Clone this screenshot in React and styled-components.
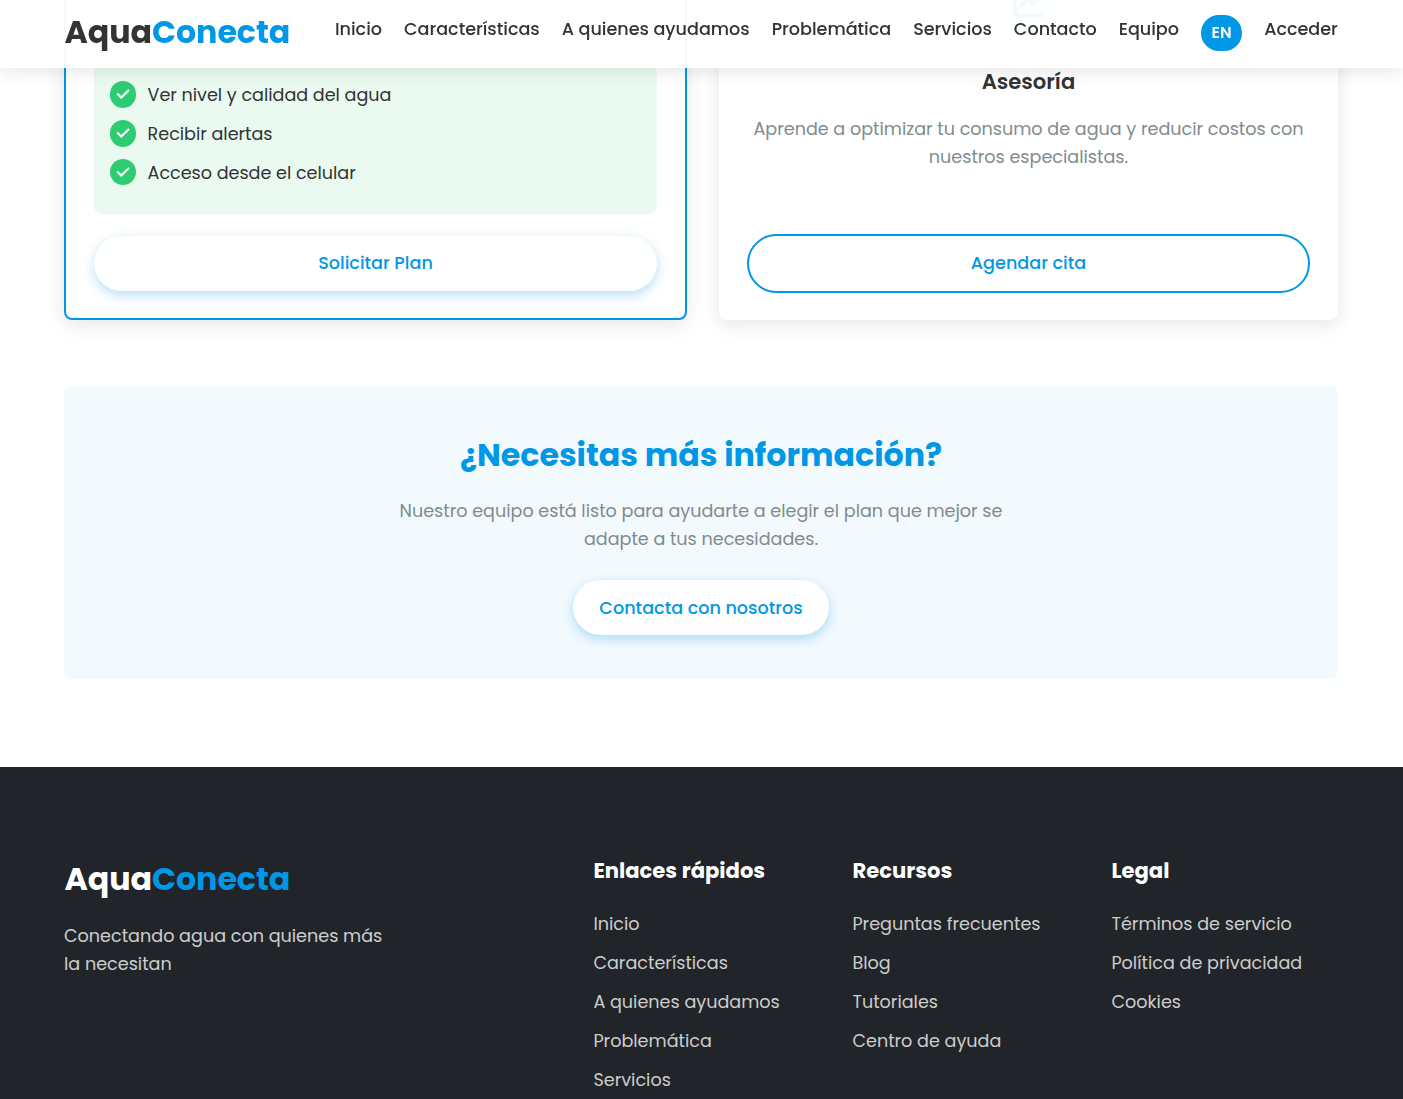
import React from "react";
import styled, { createGlobalStyle, css } from "styled-components";
import { FaCheck, FaChartLine } from "react-icons/fa6";

const blue = "#0097e6";
const ink = "#333333";
const muted = "#7f8c8d";

const GlobalStyle = createGlobalStyle`
  *, *::before, *::after { box-sizing: border-box; }
  html { font-size: 17.6px; }
  body {
    margin: 0;
    overflow: hidden;
    background: #ffffff;
    color: ${ink};
    font-family: Poppins, Inter, "Open Sans", sans-serif;
    font-size: 1rem;
    line-height: 1.6;
  }
  h2, h3, p, ul { margin: 0; padding: 0; }
  ul { list-style: none; }
  a { color: inherit; text-decoration: none; }
`;

const Page = styled.div`
  height: 1099px;
  display: flex;
  flex-direction: column;
  overflow: hidden;
`;

const Container = styled.div`
  width: 1274px;
  margin-left: 64px;
`;

const Header = styled.header`
  position: fixed;
  top: 0;
  left: 0;
  right: 0;
  z-index: 10;
  height: 68px;
  background: rgba(255, 255, 255, 0.95);
  box-shadow: 0 4px 17px rgba(0, 0, 0, 0.09);
`;

const HeaderRow = styled(Container)`
  width: 1273.4px;
  margin-left: 64.4px;
  height: 66px;
  display: flex;
  align-items: center;
  justify-content: space-between;
`;

const Logo = styled.a`
  display: block;
  padding-bottom: ${(p) => (p.$light ? "0" : "2px")};
  font-size: 1.8rem;
  font-weight: 700;
  letter-spacing: -0.05px;
  color: ${(p) => (p.$light ? "#ffffff" : ink)};

  span { color: ${blue}; }
`;

const Nav = styled.nav`
  display: flex;
  align-items: center;
  gap: 22px;
`;

const NavLink = styled.a`
  padding-bottom: 8px;
  font-weight: 500;
  letter-spacing: -0.02px;
  white-space: nowrap;
`;

const LangButton = styled.button`
  border: 0;
  border-radius: 20px;
  padding: 0.3rem 0.6rem;
  background: ${blue};
  color: #ffffff;
  font: 600 0.9rem/1.6 Poppins, Inter, sans-serif;
`;

const Plans = styled(Container)`
  display: flex;
  flex: none;
  gap: 32px;
  height: 380.4px;
  margin-top: -60px;
`;

const Card = styled.article`
  flex: 1 1 0;
  display: flex;
  flex-direction: column;
  align-items: center;
  padding: 1.6rem 1.6rem 27.5px;
  border-radius: 8px;
  background: #ffffff;
  text-align: center;
  box-shadow: 0 5px 20px rgba(0, 0, 0, 0.1);
  ${(p) => p.$featured && css`
    border: 2px solid ${blue};
    justify-content: flex-end;
  `}
`;

const Features = styled.ul`
  align-self: stretch;
  margin-bottom: 22.2px;
  padding: 0.9rem 0.9rem 16.1px;
  border-radius: 8px;
  background: rgba(46, 204, 113, 0.1);
  text-align: left;
`;

const Feature = styled.li`
  display: flex;
  align-items: center;
  gap: 11.2px;
  margin-bottom: 10.8px;
  letter-spacing: -0.02px;
`;

const CheckBadge = styled.span`
  width: 1.5rem;
  height: 1.5rem;
  display: flex;
  align-items: center;
  justify-content: center;
  margin-bottom: 1px;
  border-radius: 50%;
  background: #2ecc71;
  color: #ffffff;
  font-size: 0.8rem;

  svg {
    overflow: visible;
    stroke: currentColor;
    stroke-width: 18px;
  }
`;

const IconCircle = styled.div`
  flex: none;
  width: 4rem;
  height: 4rem;
  display: flex;
  align-items: center;
  justify-content: center;
  margin-bottom: 1.5rem;
  border-radius: 50%;
  background: rgba(0, 151, 230, 0.1);
  color: ${blue};
  font-size: 1.8rem;
`;

const CardTitle = styled.h3`
  margin-bottom: 0.9rem;
  font-size: 1.2rem;
  font-weight: 600;
`;

const Text = styled.p`
  max-width: ${(p) => p.$max || "none"};
  color: ${muted};
  letter-spacing: -0.01px;
`;

const Button = styled.a`
  display: block;
  align-self: ${(p) => (p.$block ? "stretch" : "center")};
  margin-top: ${(p) => (p.$bottom ? "auto" : "0")};
  padding: ${(p) => (p.$block ? "13.42px 1.5rem" : "13.72px 1.5rem 13.12px")};
  border-radius: 50px;
  background: #ffffff;
  color: ${blue};
  font-weight: 500;
  text-align: center;
  ${(p) => p.$outline
    ? css`border: 2px solid ${blue};`
    : css`box-shadow: 0 4px 12px rgba(0, 151, 230, 0.3);`}
`;

const Cta = styled(Container)`
  flex: none;
  display: flex;
  flex-direction: column;
  align-items: center;
  margin-top: 65.2px;
  padding: 2.5rem;
  border-radius: 8px;
  background: rgba(0, 151, 230, 0.05);
  text-align: center;

  h2 {
    margin-bottom: 17px;
    color: ${blue};
    font-size: 1.8rem;
    font-weight: 700;
  }
  p { margin-bottom: 1.5rem; }
`;

const Footer = styled.footer`
  flex: 1 0 auto;
  margin-top: 88.2px;
  padding-top: 87.2px;
  background: #212529;
  color: #ffffff;
`;

const FooterGrid = styled(Container)`
  margin-left: 64.4px;
  display: grid;
  grid-template-columns: 497px 1fr 1fr 1fr;
  gap: 32px;
`;

const Tagline = styled.p`
  max-width: 330px;
  margin-top: 16.8px;
  margin-left: -0.4px;
  color: #ffffff;
  opacity: 0.77;
`;

const FooterTitle = styled.h3`
  margin-bottom: 22px;
  font-size: 1.2rem;
  font-weight: 700;
`;

const FooterItem = styled.li`
  margin-bottom: 10.8px;
  color: #cccccc;
  white-space: nowrap;
`;

const navItems = [
  "Inicio", "Características", "A quienes ayudamos", "Problemática",
  "Servicios", "Contacto", "Equipo",
];

const features = ["Ver nivel y calidad del agua", "Recibir alertas", "Acceso desde el celular"];

const footerColumns = [
  {
    title: "Enlaces rápidos",
    items: ["Inicio", "Características", "A quienes ayudamos", "Problemática", "Servicios"],
  },
  {
    title: "Recursos",
    items: ["Preguntas frecuentes", "Blog", "Tutoriales", "Centro de ayuda"],
  },
  {
    title: "Legal",
    items: ["Términos de servicio", "Política de privacidad", "Cookies"],
  },
];

export default function App() {
  return (
    <Page>
      <GlobalStyle />
      <Header>
        <HeaderRow>
          <Logo href="#">Aqua<span>Conecta</span></Logo>
          <Nav>
            {navItems.map((item) => <NavLink key={item} href="#">{item}</NavLink>)}
            <LangButton>EN</LangButton>
            <NavLink href="#">Acceder</NavLink>
          </Nav>
        </HeaderRow>
      </Header>

      <Plans>
        <Card $featured>
          <Features>
            {features.map((item) => (
              <Feature key={item}>
                <CheckBadge><FaCheck /></CheckBadge>
                {item}
              </Feature>
            ))}
          </Features>
          <Button href="#" $block>Solicitar Plan</Button>
        </Card>
        <Card>
          <IconCircle><FaChartLine /></IconCircle>
          <CardTitle>Asesoría</CardTitle>
          <Text>Aprende a optimizar tu consumo de agua y reducir costos con nuestros especialistas.</Text>
          <Button href="#" $block $outline $bottom>Agendar cita</Button>
        </Card>
      </Plans>

      <Cta>
        <h2>¿Necesitas más información?</h2>
        <Text $max="617px">Nuestro equipo está listo para ayudarte a elegir el plan que mejor se adapte a tus necesidades.</Text>
        <Button href="#">Contacta con nosotros</Button>
      </Cta>

      <Footer>
        <FooterGrid>
          <div>
            <Logo href="#" $light>Aqua<span>Conecta</span></Logo>
            <Tagline>Conectando agua con quienes más la necesitan</Tagline>
          </div>
          {footerColumns.map((col) => (
            <div key={col.title}>
              <FooterTitle>{col.title}</FooterTitle>
              <ul>
                {col.items.map((item) => (
                  <FooterItem key={item}><a href="#">{item}</a></FooterItem>
                ))}
              </ul>
            </div>
          ))}
        </FooterGrid>
      </Footer>
    </Page>
  );
}
